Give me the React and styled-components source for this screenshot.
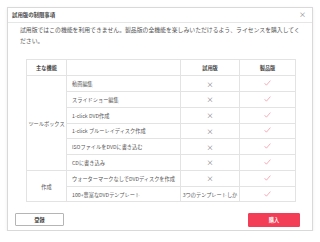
import React from 'react';
import styled, { createGlobalStyle } from 'styled-components';

const Global = createGlobalStyle`
  html, body {
    margin: 0;
    padding: 0;
    background: #fff;
  }
  body {
    font-family: "Noto Sans CJK JP", "Noto Sans", sans-serif;
    color: #555;
  }
`;

const Dialog = styled.div`
  box-sizing: border-box;
  margin: 7px 0 0 7px;
  width: 306px;
  height: 224px;
  border: 1px solid #d9d9d9;
  box-shadow: 0 1px 3px rgba(0, 0, 0, 0.08);
  background: #fff;
  display: flex;
  flex-direction: column;
`;

const Header = styled.div`
  height: 14px;
  border-bottom: 1px solid #e6e6e6;
  display: flex;
  align-items: center;
  justify-content: space-between;
  padding: 0 6px 0 4px;
`;

const Title = styled.div`
  font-size: 5.4px;
  font-weight: bold;
  color: #444;
`;

const Close = styled.div`
  font-size: 7px;
  color: #777;
  line-height: 1;
`;

const Message = styled.p`
  margin: 1px 10px 0 12px;
  font-size: 5.85px;
  line-height: 11px;
  color: #555;
`;

const Table = styled.table`
  margin: 13px 0 0 18px;
  width: 269px;
  border-collapse: collapse;
  table-layout: fixed;
  font-size: 5.2px;
  color: #555;
`;

const Row = styled.tr`
  height: ${p => (p.$head ? '16.5px' : '15.8px')};
`;

const Th = styled.th`
  padding: 0;
  border: 1px solid #e3e3e3;
  font-weight: bold;
  text-align: center;
  color: #444;
`;

const Td = styled.td`
  padding: 0 0 0 ${p => (p.$left ? '5px' : '0')};
  border: 1px solid #e3e3e3;
  text-align: ${p => (p.$left ? 'left' : 'center')};
  vertical-align: middle;
  white-space: nowrap;
`;

const Cross = styled.span`
  font-size: 7px;
  color: #777;
`;

const Footer = styled.div`
  margin-top: auto;
  height: 28px;
  display: flex;
  align-items: flex-start;
  justify-content: space-between;
  padding: 10px 12px 0 7px;
  box-sizing: border-box;
`;

const Button = styled.div`
  box-sizing: border-box;
  width: ${p => (p.$primary ? '52px' : '49px')};
  height: ${p => (p.$primary ? '14px' : '13px')};
  display: flex;
  align-items: center;
  justify-content: center;
  font-size: 5.2px;
  font-weight: bold;
  background: ${p => (p.$primary ? '#f33d56' : '#fff')};
  color: ${p => (p.$primary ? '#fff' : '#444')};
  border: 1px solid ${p => (p.$primary ? '#f33d56' : '#b5b5b5')};
  border-radius: 1px;
`;

function Check() {
  return (
    <svg width="7" height="6" viewBox="0 0 7 6" style={{ display: 'inline-block' }}>
      <path d="M0.6 3.2 L2.4 5.2 L6.4 0.6" fill="none" stroke="#f28b9c" strokeWidth="0.7" />
    </svg>
  );
}

const tools = [
  '動画編集',
  'スライドショー編集',
  '1-click DVD作成',
  '1-click ブルーレイディスク作成',
  'ISOファイルをDVDに書き込む',
  'CDに書き込み',
];

const create = [
  ['ウォーターマークなしでDVDディスクを作成', null],
  ['100+豊富なDVDテンプレート', '3つのテンプレートしか'],
];

export default function App() {
  return (
    <>
      <Global />
      <Dialog>
        <Header>
          <Title>試用版の制限事項</Title>
          <Close>×</Close>
        </Header>
        <Message>
          試用版ではこの機能を利用できません。製品版の全機能を楽しみいただけるよう、ライセンスを購入してください。
        </Message>
        <Table>
          <colgroup>
            <col style={{ width: 40 }} />
            <col style={{ width: 114 }} />
            <col style={{ width: 59 }} />
            <col style={{ width: 56 }} />
          </colgroup>
          <thead>
            <Row $head>
              <Th>主な機能</Th>
              <Th />
              <Th>試用版</Th>
              <Th>製品版</Th>
            </Row>
          </thead>
          <tbody>
            {tools.map((t, i) => (
              <Row key={t}>
                {i === 0 && <Td rowSpan={tools.length}>ツールボックス</Td>}
                <Td $left>{t}</Td>
                <Td><Cross>×</Cross></Td>
                <Td><Check /></Td>
              </Row>
            ))}
            {create.map(([t, trial], i) => (
              <Row key={t}>
                {i === 0 && <Td rowSpan={create.length}>作成</Td>}
                <Td $left>{t}</Td>
                <Td>{trial ? trial : <Cross>×</Cross>}</Td>
                <Td><Check /></Td>
              </Row>
            ))}
          </tbody>
        </Table>
        <Footer>
          <Button>登録</Button>
          <Button $primary>購入</Button>
        </Footer>
      </Dialog>
    </>
  );
}
